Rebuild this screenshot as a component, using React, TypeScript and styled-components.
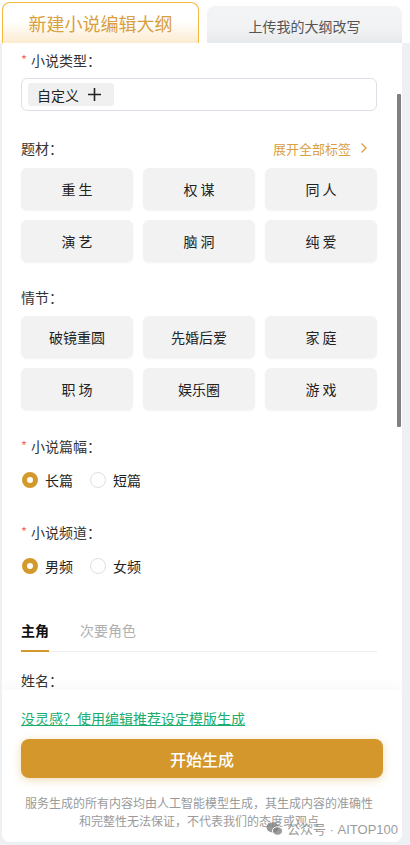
import React, { useState } from 'react'
import styled, { createGlobalStyle } from 'styled-components'

const GlobalStyle = createGlobalStyle`
  body {
    margin: 0;
    background: #ffffff;
    font-family: "Noto Sans CJK SC", "Noto Sans", sans-serif;
    color: #333333;
  }
  * {
    box-sizing: border-box;
  }
`

const Page = styled.div`
  width: 410px;
  height: 845px;
  display: flex;
  flex-direction: column;
  overflow: hidden;
`

const TabBar = styled.div`
  height: 43px;
  display: flex;
  align-items: flex-end;
  gap: 8px;
  padding: 0 8px 0 2px;
  flex-shrink: 0;
`

const HeadTab = styled.div<{ active?: boolean }>`
  flex: 1;
  height: ${({ active }) => (active ? '41px' : '37px')};
  display: flex;
  align-items: center;
  justify-content: center;
  border-radius: 8px 8px 0 0;
  border: ${({ active }) => (active ? '1px solid #f5b940' : 'none')};
  border-bottom: none;
  background: ${({ active }) =>
    active
      ? 'linear-gradient(180deg, #ffffff 0%, #ffffff 45%, #fcebd0 100%)'
      : 'linear-gradient(180deg, #f3f4f5 0%, #f1f2f3 60%, #e6e9eb 100%)'};
  color: ${({ active }) => (active ? '#d9a040' : '#555555')};
  font-size: ${({ active }) => (active ? '18px' : '14px')};
  padding-top: ${({ active }) => (active ? '0' : '2px')};
`

const Wrapper = styled.div`
  flex: 1;
  min-height: 0;
  background: #eef1f3;
  padding: 0 8px 3px 2px;
  display: flex;
`

const Panel = styled.div`
  position: relative;
  flex: 1;
  background: #ffffff;
  border-radius: 0 0 8px 8px;
  display: flex;
  flex-direction: column;
  overflow: hidden;
`

const ScrollArea = styled.div`
  flex: 1;
  min-height: 0;
  overflow: hidden;
  padding: 7px 25px 0 19px;
`

const ScrollThumb = styled.div`
  position: absolute;
  top: 51px;
  right: 1px;
  width: 4px;
  height: 333px;
  background: #808080;
  border-radius: 1px;
`

const Label = styled.div<{ mt?: number }>`
  height: 20px;
  line-height: 20px;
  font-size: 14px;
  color: #333333;
  margin-top: ${({ mt }) => mt ?? 0}px;
  display: flex;
  align-items: center;
`

const Star = styled.span`
  color: #f56c6c;
  margin-right: 4px;
  font-size: 13px;
`

const LabelRow = styled.div<{ mt?: number }>`
  display: flex;
  justify-content: space-between;
  align-items: center;
  margin-top: ${({ mt }) => mt ?? 0}px;
`

const ExpandLink = styled.div`
  display: flex;
  align-items: center;
  gap: 9px;
  color: #d9a040;
  font-size: 13px;
  margin-right: 9px;
`

const InputBox = styled.div`
  margin-top: 8px;
  height: 33px;
  border: 1px solid #dcdfe6;
  border-radius: 6px;
  padding: 4px 6px;
  display: flex;
  align-items: center;
`

const CustomTag = styled.div`
  height: 23px;
  width: 86px;
  background: #f0f0f0;
  border-radius: 3px;
  display: flex;
  align-items: center;
  padding-left: 9px;
  gap: 8px;
  font-size: 14px;
  color: #222222;
`

const TagGrid = styled.div<{ mt?: number }>`
  margin-top: ${({ mt }) => mt ?? 0}px;
  display: grid;
  grid-template-columns: repeat(3, 1fr);
  column-gap: 10px;
  row-gap: 10px;
`

const TagButton = styled.div`
  height: 42px;
  background: #f2f2f2;
  border-radius: 6px;
  box-shadow: 0 1px 2px rgba(0, 0, 0, 0.05);
  display: flex;
  align-items: center;
  justify-content: center;
  font-size: 14px;
  color: #222222;
  white-space: pre;
`

const RadioRow = styled.div<{ mt?: number }>`
  margin-top: ${({ mt }) => mt ?? 0}px;
  height: 20px;
  display: flex;
  align-items: center;
  gap: 17px;
  padding-left: 1px;
`

const RadioItem = styled.div`
  display: flex;
  align-items: center;
  gap: 7px;
  font-size: 14px;
  color: #222222;
  cursor: pointer;
`

const RadioDot = styled.span<{ checked?: boolean }>`
  width: 16px;
  height: 16px;
  border-radius: 50%;
  border: ${({ checked }) => (checked ? '5px solid #d4992c' : '1px solid #dcdfe6')};
  background: #ffffff;
`

const RoleTabs = styled.div`
  margin-top: 44px;
  display: flex;
  gap: 31px;
  border-bottom: 1px solid #eeeeee;
`

const RoleTab = styled.div<{ active?: boolean }>`
  font-size: 14px;
  line-height: 20px;
  padding-bottom: 10px;
  margin-bottom: -1px;
  font-weight: ${({ active }) => (active ? 700 : 400)};
  color: ${({ active }) => (active ? '#111111' : '#b0b0b0')};
  border-bottom: 2px solid ${({ active }) => (active ? '#d4992c' : 'transparent')};
`

const Footer = styled.div`
  flex-shrink: 0;
  padding: 18px 19px 12px 19px;
  box-shadow: 0 -6px 8px rgba(0, 0, 0, 0.025);
  position: relative;
  background: #ffffff;
`

const InspireLink = styled.a`
  display: block;
  height: 20px;
  line-height: 20px;
  font-size: 14px;
  color: #1aad6e;
  text-decoration: underline;
  cursor: pointer;
`

const GenerateButton = styled.button`
  margin-top: 11px;
  width: 362px;
  height: 39px;
  border: none;
  border-radius: 8px;
  background: #d4972b;
  color: #ffffff;
  font-family: inherit;
  font-size: 16px;
  font-weight: 500;
  box-shadow: 0 2px 8px rgba(212, 151, 43, 0.35);
  cursor: pointer;
`

const Disclaimer = styled.p`
  margin: 16px 0 0 0;
  text-align: center;
  font-size: 12px;
  line-height: 18px;
  color: #9a9a9a;
  padding-right: 6px;
`

const Watermark = styled.div`
  position: absolute;
  right: 4px;
  bottom: 4px;
  display: flex;
  align-items: center;
  gap: 4px;
  font-family: "Liberation Sans", "Noto Sans CJK SC", sans-serif;
  font-size: 13px;
  color: rgba(120, 120, 120, 0.75);
`

const PlusIcon = () => (
  <svg width="15" height="15" viewBox="0 0 15 15">
    <path d="M7.5 1v13M1 7.5h13" stroke="#222" strokeWidth="1.6" />
  </svg>
)

const Chevron = () => (
  <svg width="8" height="12" viewBox="0 0 8 12">
    <path d="M1.5 1.5l4.5 4.5-4.5 4.5" fill="none" stroke="#d9a040" strokeWidth="1.4" />
  </svg>
)

const WechatIcon = () => (
  <svg width="17" height="14" viewBox="0 0 17 14">
    <ellipse cx="6.5" cy="5.5" rx="6" ry="5" fill="rgba(120,120,120,0.75)" />
    <ellipse cx="11.5" cy="9" rx="5" ry="4.2" fill="rgba(120,120,120,0.75)" stroke="#fff" strokeWidth="1" />
  </svg>
)

const themes = ['重 生', '权 谋', '同 人', '演 艺', '脑 洞', '纯 爱']
const plots = ['破镜重圆', '先婚后爱', '家 庭', '职 场', '娱乐圈', '游 戏']

export default function App() {
  const [length, setLength] = useState('长篇')
  const [channel, setChannel] = useState('男频')

  return (
    <Page>
      <GlobalStyle />
      <TabBar>
        <HeadTab active>新建小说编辑大纲</HeadTab>
        <HeadTab>上传我的大纲改写</HeadTab>
      </TabBar>
      <Wrapper>
        <Panel>
          <ScrollArea>
            <Label>
              <Star>*</Star>小说类型：
            </Label>
            <InputBox>
              <CustomTag>
                自定义
                <PlusIcon />
              </CustomTag>
            </InputBox>

            <LabelRow mt={27}>
              <Label>题材：</Label>
              <ExpandLink>
                展开全部标签
                <Chevron />
              </ExpandLink>
            </LabelRow>
            <TagGrid mt={10}>
              {themes.map((t) => (
                <TagButton key={t}>{t}</TagButton>
              ))}
            </TagGrid>

            <Label mt={25}>情节：</Label>
            <TagGrid mt={9}>
              {plots.map((t) => (
                <TagButton key={t}>{t}</TagButton>
              ))}
            </TagGrid>

            <Label mt={26}>
              <Star>*</Star>小说篇幅：
            </Label>
            <RadioRow mt={14}>
              {['长篇', '短篇'].map((v) => (
                <RadioItem key={v} onClick={() => setLength(v)}>
                  <RadioDot checked={length === v} />
                  {v}
                </RadioItem>
              ))}
            </RadioRow>

            <Label mt={32}>
              <Star>*</Star>小说频道：
            </Label>
            <RadioRow mt={14}>
              {['男频', '女频'].map((v) => (
                <RadioItem key={v} onClick={() => setChannel(v)}>
                  <RadioDot checked={channel === v} />
                  {v}
                </RadioItem>
              ))}
            </RadioRow>

            <RoleTabs>
              <RoleTab active>主角</RoleTab>
              <RoleTab>次要角色</RoleTab>
            </RoleTabs>

            <Label mt={18}>姓名：</Label>
          </ScrollArea>
          <ScrollThumb />

          <Footer>
            <InspireLink>没灵感？使用编辑推荐设定模版生成</InspireLink>
            <GenerateButton>开始生成</GenerateButton>
            <Disclaimer>
              服务生成的所有内容均由人工智能模型生成，其生成内容的准确性
              <br />
              和完整性无法保证，不代表我们的态度或观点
            </Disclaimer>
            <Watermark>
              <WechatIcon />
              公众号 · AITOP100
            </Watermark>
          </Footer>
        </Panel>
      </Wrapper>
    </Page>
  )
}
